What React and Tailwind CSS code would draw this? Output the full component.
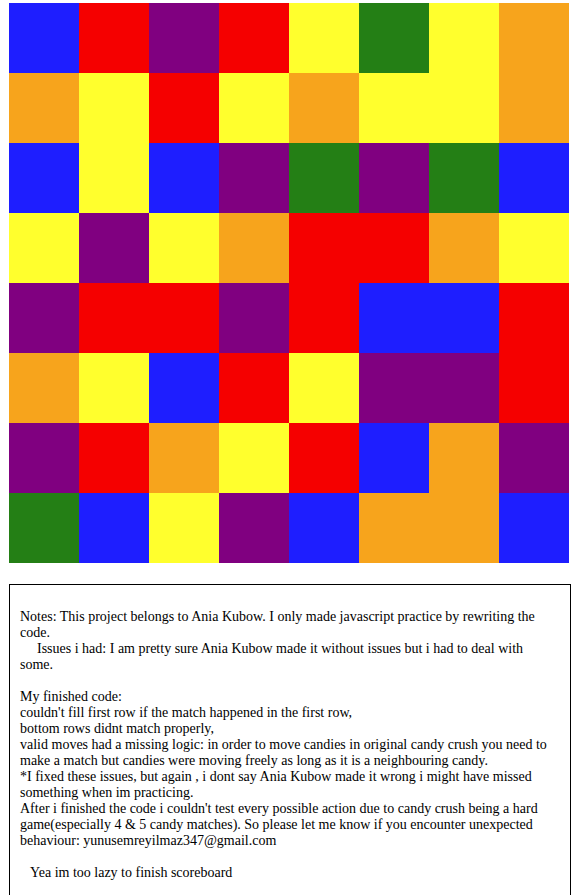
const C = {
  b: 'bg-[#1e1eff]',
  r: 'bg-[#f50000]',
  p: 'bg-[#800080]',
  y: 'bg-[#ffff2d]',
  g: 'bg-[#247f15]',
  o: 'bg-[#f7a41c]',
};

const board = [
  'b r p r y g y o',
  'o y r y o y y o',
  'b y b p g p g b',
  'y p y o r r o y',
  'p r r p r b b r',
  'o y b r y p p r',
  'p r o y r b o p',
  'g b y p b o o b',
];

const lines = [
  { t: 'Notes: This project belongs to Ania Kubow. I only made javascript practice by rewriting the' },
  { t: 'code.' },
  { t: 'Issues i had: I am pretty sure Ania Kubow made it without issues but i had to deal with', indent: 'pl-[17px]' },
  { t: 'some.' },
  { t: '' },
  { t: 'My finished code:' },
  { t: "couldn't fill first row if the match happened in the first row," },
  { t: 'bottom rows didnt match properly,' },
  { t: 'valid moves had a missing logic: in order to move candies in original candy crush you need to' },
  { t: 'make a match but candies were moving freely as long as it is a neighbouring candy.' },
  { t: '*I fixed these issues, but again , i dont say Ania Kubow made it wrong i might have missed' },
  { t: 'something when im practicing.' },
  { t: "After i finished the code i couldn't test every possible action due to candy crush being a hard" },
  { t: 'game(especially 4 & 5 candy matches). So please let me know if you encounter unexpected' },
  { t: 'behaviour: yunusemreyilmaz347@gmail.com' },
  { t: '' },
  { t: 'Yea im too lazy to finish scoreboard', indent: 'pl-[10px]' },
];

function Board() {
  return (
    <div className="grid grid-cols-8 w-[560px] h-[560px]">
      {board.flatMap((row, i) =>
        row.split(' ').map((c, j) => <div key={`${i}-${j}`} className={`w-[70px] h-[70px] ${C[c]}`} />)
      )}
    </div>
  );
}

export default function App() {
  return (
    <div className="bg-white min-h-screen pt-[3px] pl-[9px]" style={{ fontFamily: '"Liberation Serif", "Times New Roman", serif' }}>
      <Board />
      <div className="mt-[21px] w-[562px] border border-black pt-[24px] pl-[10px] pb-[40px] text-[14px] leading-[16px] text-black">
        {lines.map((l, i) => (
          <div key={i} className={`h-[16px] whitespace-nowrap ${l.indent || ''}`}>
            {l.t}
          </div>
        ))}
      </div>
    </div>
  );
}
